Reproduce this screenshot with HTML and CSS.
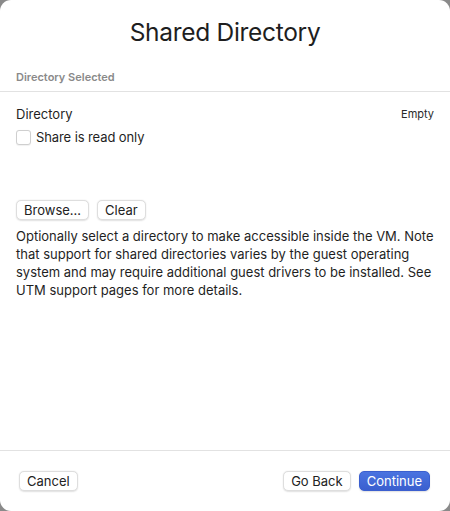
FILE: index.html
```html
<!DOCTYPE html>
<html>
<head>
<meta charset="utf-8">
<link rel="stylesheet" href="styles.css">
</head>
<body>
<div class="window">
  <h1 class="title">Shared Directory</h1>
  <div class="section-head">Directory Selected</div>
  <div class="content">
    <div class="row">
      <span class="label">Directory</span>
      <span class="value">Empty</span>
    </div>
    <label class="check">
      <span class="box"></span>
      <span>Share is read only</span>
    </label>
    <div class="buttons">
      <button class="btn">Browse…</button>
      <button class="btn">Clear</button>
    </div>
    <p class="desc">Optionally select a directory to make accessible inside the VM. Note that support for shared directories varies by the guest operating system and may require additional guest drivers to be installed. See UTM support pages for more details.</p>
  </div>
  <div class="footer">
    <button class="btn">Cancel</button>
    <div class="right">
      <button class="btn">Go Back</button>
      <button class="btn primary">Continue</button>
    </div>
  </div>
</div>
</body>
</html>
```

FILE: styles.css
```css
html, body {
  margin: 0;
  padding: 0;
  width: 450px;
  height: 511px;
  background: #8a8a8a;
  overflow: hidden;
}
.window {
  width: 450px;
  height: 511px;
  background: #ffffff;
  border-radius: 11px;
  display: flex;
  flex-direction: column;
  font-family: Inter, "Noto Sans", sans-serif;
  color: #1f1f1f;
  box-sizing: border-box;
}
.title {
  margin: 0;
  padding-top: 16px;
  height: 40px;
  text-align: center;
  font-size: 24.5px;
  font-weight: 400;
  line-height: 32px;
  color: #1e1e1e;
  letter-spacing: -0.3px;
}
.section-head {
  margin-top: 13px;
  padding: 0 16px;
  font-size: 11px;
  font-weight: 600;
  color: #8a8a8a;
  height: 22px;
  line-height: 16px;
  border-bottom: 1px solid #e2e2e2;
}
.content {
  padding: 0 16px;
  flex: 1;
  border-bottom: 1px solid #e2e2e2;
}
.row {
  display: flex;
  justify-content: space-between;
  align-items: center;
  margin-top: 14px;
  height: 16px;
}
.label {
  font-size: 13px;
}
.value {
  font-size: 11px;
  color: #2a2a2a;
}
.check {
  display: flex;
  align-items: center;
  gap: 5px;
  margin-top: 7px;
  font-size: 13px;
  height: 16px;
  letter-spacing: -0.1px;
}
.box {
  width: 13px;
  height: 13px;
  border: 1px solid #cfcfcf;
  border-radius: 3px;
  background: #fff;
  box-shadow: 0 0.5px 1px rgba(0,0,0,0.06);
}
.buttons {
  display: flex;
  gap: 8px;
  margin-top: 55px;
}
.btn {
  font-family: Inter, "Noto Sans", sans-serif;
  font-size: 13px;
  color: #222;
  background: #fff;
  border: 1px solid #dedede;
  border-radius: 5px;
  height: 20px;
  padding: 0 7px;
  line-height: 18px;
  box-shadow: 0 0.5px 1.5px rgba(0,0,0,0.12);
}
.desc {
  margin: 7px 0 0;
  font-size: 13px;
  line-height: 18px;
  color: #1f1f1f;
}
.footer {
  height: 60px;
  display: flex;
  justify-content: space-between;
  align-items: flex-start;
  padding: 20px 20px 0 19px;
  box-sizing: border-box;
}
.right {
  display: flex;
  gap: 8px;
}
.btn.primary {
  background: linear-gradient(#4a73e0, #3a5fcf);
  border-color: #3b5fcf;
  color: #fff;
}
```
